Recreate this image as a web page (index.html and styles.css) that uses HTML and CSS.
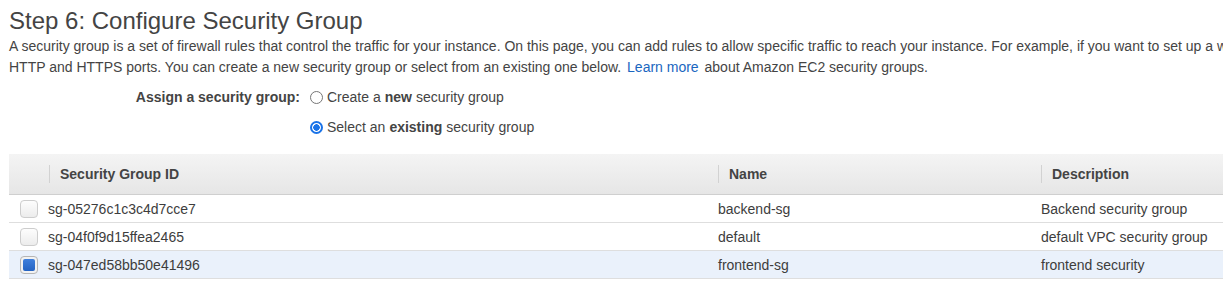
FILE: index.html
```
<!DOCTYPE html>
<html lang="en">
<head>
    <meta charset="UTF-8">
    <meta name="viewport" content="width=device-width, initial-scale=1.0">
    <title>Step 6: Configure Security Group</title>
    <link rel="stylesheet" href="styles.css">
</head>
<body>
    <div class="page">
        <h1 class="title">Step 6: Configure Security Group</h1>
        <p class="intro">A security group is a set of firewall rules that control the traffic for your instance. On this page, you can add rules to allow specific traffic to reach your instance. For example, if you want to set up a web server and allow Internet traffic to reach your instance, add rules that allow unrestricted access to the<br>HTTP and HTTPS ports. You can create a new security group or select from an existing one below. <a href="#" class="link">Learn more</a> about Amazon EC2 security groups.</p>

        <div class="assign">
            <div class="assign-label">Assign a security group:</div>
            <div class="assign-options">
                <label class="option"><span class="radio"></span>Create a <b>new</b> security group</label>
                <label class="option"><span class="radio checked"></span>Select an <b>existing</b> security group</label>
            </div>
        </div>

        <div class="sg-table">
            <div class="sg-head">
                <div class="hcell"></div>
                <div class="hcell sep">Security Group ID</div>
                <div class="hcell sep">Name</div>
                <div class="hcell sep">Description</div>
            </div>
            <div class="sg-row">
                <div class="cell"><span class="check"></span></div>
                <div class="cell">sg-05276c1c3c4d7cce7</div>
                <div class="cell">backend-sg</div>
                <div class="cell">Backend security group</div>
            </div>
            <div class="sg-row">
                <div class="cell"><span class="check"></span></div>
                <div class="cell">sg-04f0f9d15ffea2465</div>
                <div class="cell">default</div>
                <div class="cell">default VPC security group</div>
            </div>
            <div class="sg-row selected">
                <div class="cell"><span class="check on"></span></div>
                <div class="cell">sg-047ed58bb50e41496</div>
                <div class="cell">frontend-sg</div>
                <div class="cell">frontend security</div>
            </div>
        </div>
    </div>
</body>
</html>
```

FILE: styles.css
```
html, body {
    margin: 0;
    overflow: hidden;
    background: #fff;
}
body {
    font-family: "Liberation Sans", Arial, Helvetica, sans-serif;
    font-size: 14px;
    color: #444;
}
.page {
    width: 1420px;
    padding-left: 9px;
}
.title {
    margin: 7px 0 0;
    font-size: 24px;
    font-weight: normal;
    line-height: 27px;
    color: #444;
}
.intro {
    margin: 2px 0 0;
    line-height: 21px;
    white-space: nowrap;
}
.link {
    color: #1a66c0;
    text-decoration: none;
    margin: 0 2px;
}

.assign {
    display: flex;
    margin-top: 4px;
}
.assign-label {
    width: 291px;
    text-align: right;
    font-weight: bold;
    line-height: 30px;
}
.assign-options {
    display: flex;
    flex-direction: column;
    margin-left: 10px;
}
.option {
    display: flex;
    align-items: center;
    height: 30px;
}
.option b {
    margin: 0 4px;
}
.radio {
    box-sizing: border-box;
    width: 13px;
    height: 13px;
    margin-right: 4px;
    border: 1px solid #767676;
    border-radius: 50%;
    background: #fff;
}
.radio.checked {
    border: 2px solid #1a73e8;
    background: radial-gradient(circle, #1a73e8 0 3px, #fff 3.5px);
}

.sg-table {
    margin-top: 12px;
}
.sg-head {
    display: grid;
    grid-template-columns: 40px 669px 323px 380px;
    height: 40px;
    background: linear-gradient(#f4f4f4, #e6e6e6);
    border-bottom: 1px solid #cfcfcf;
}
.hcell {
    display: flex;
    align-items: center;
    font-weight: bold;
    color: #444;
}
.hcell.sep {
    padding-left: 11px;
    position: relative;
}
.hcell.sep::before {
    content: "";
    position: absolute;
    left: 0;
    top: 11px;
    height: 18px;
    border-left: 1px solid #d2d2d2;
}
.sg-row {
    display: grid;
    grid-template-columns: 39px 670px 323px 380px;
    height: 27px;
    border-bottom: 1px solid #dedede;
}
.sg-row.selected {
    background: #eaf1fb;
}
.cell {
    display: flex;
    align-items: center;
    color: #3d3d3d;
}
.check {
    box-sizing: border-box;
    width: 18px;
    height: 18px;
    margin-left: 11px;
    border: 1px solid #cdcdcd;
    border-radius: 4px;
    background: linear-gradient(#fdfdfd, #ececec);
}
.check.on {
    padding: 2px;
    border-color: #b5b5b5;
    background: #f2f2f2;
}
.check.on::before {
    content: "";
    display: block;
    width: 100%;
    height: 100%;
    border-radius: 2px;
    background: linear-gradient(#3f7fdc, #2463c2);
}
```
